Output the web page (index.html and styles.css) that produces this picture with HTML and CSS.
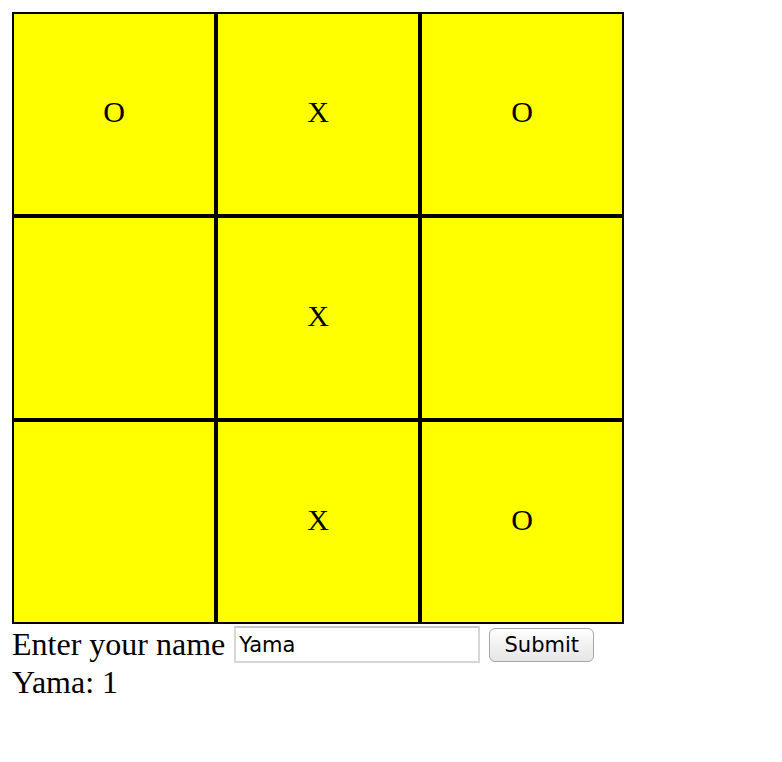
FILE: index.html
```html
<!DOCTYPE html>
<html>
<head>
<meta charset="utf-8">
<link rel="stylesheet" href="styles.css">
</head>
<body>
<div class="board">
  <div class="cell">O</div>
  <div class="cell">X</div>
  <div class="cell">O</div>
  <div class="cell"></div>
  <div class="cell">X</div>
  <div class="cell"></div>
  <div class="cell"></div>
  <div class="cell">X</div>
  <div class="cell">O</div>
</div>
<form class="name-form">
  <label class="label" for="name">Enter your name</label>
  <input class="name-input" id="name" type="text" value="Yama">
  <button class="submit" type="button">Submit</button>
</form>
<div class="score">Yama: 1</div>
</body>
</html>
```

FILE: styles.css
```css
html, body {
  background: #fff;
}
body {
  margin: 12px;
  font-family: "Liberation Serif", "Times New Roman", serif;
  font-size: 32px;
  color: #000;
}
.board {
  display: grid;
  grid-template-columns: repeat(3, 204px);
  grid-auto-rows: 204px;
  width: 612px;
}
.cell {
  box-sizing: border-box;
  border: 2px solid #000;
  background: #ffff00;
  display: flex;
  align-items: center;
  justify-content: center;
  font-size: 30px;
  padding-bottom: 4px;
}
.name-form {
  display: flex;
  align-items: center;
  height: 39px;
  margin: 0;
}
.label {
  line-height: 36px;
  margin-right: 9px;
}
.name-input {
  box-sizing: border-box;
  width: 246px;
  height: 37px;
  margin: 2px 0 0 0;
  padding: 0 3px;
  border: 2px solid #d6d6d6;
  border-top-color: #c8c8c8;
  font-family: "DejaVu Sans", "Lucida Grande", sans-serif;
  font-size: 21px;
  color: #000;
  background: #fff;
  outline: none;
}
.submit {
  box-sizing: border-box;
  width: 105px;
  height: 34px;
  margin: 2px 0 0 9px;
  padding: 0;
  border: 1px solid #a6a6a6;
  border-radius: 6px;
  background: linear-gradient(#ffffff, #f1f1f1 50%, #e6e6e6);
  font-family: "DejaVu Sans", "Lucida Grande", sans-serif;
  font-size: 21px;
  color: #000;
}
.score {
  line-height: 38px;
}
```
